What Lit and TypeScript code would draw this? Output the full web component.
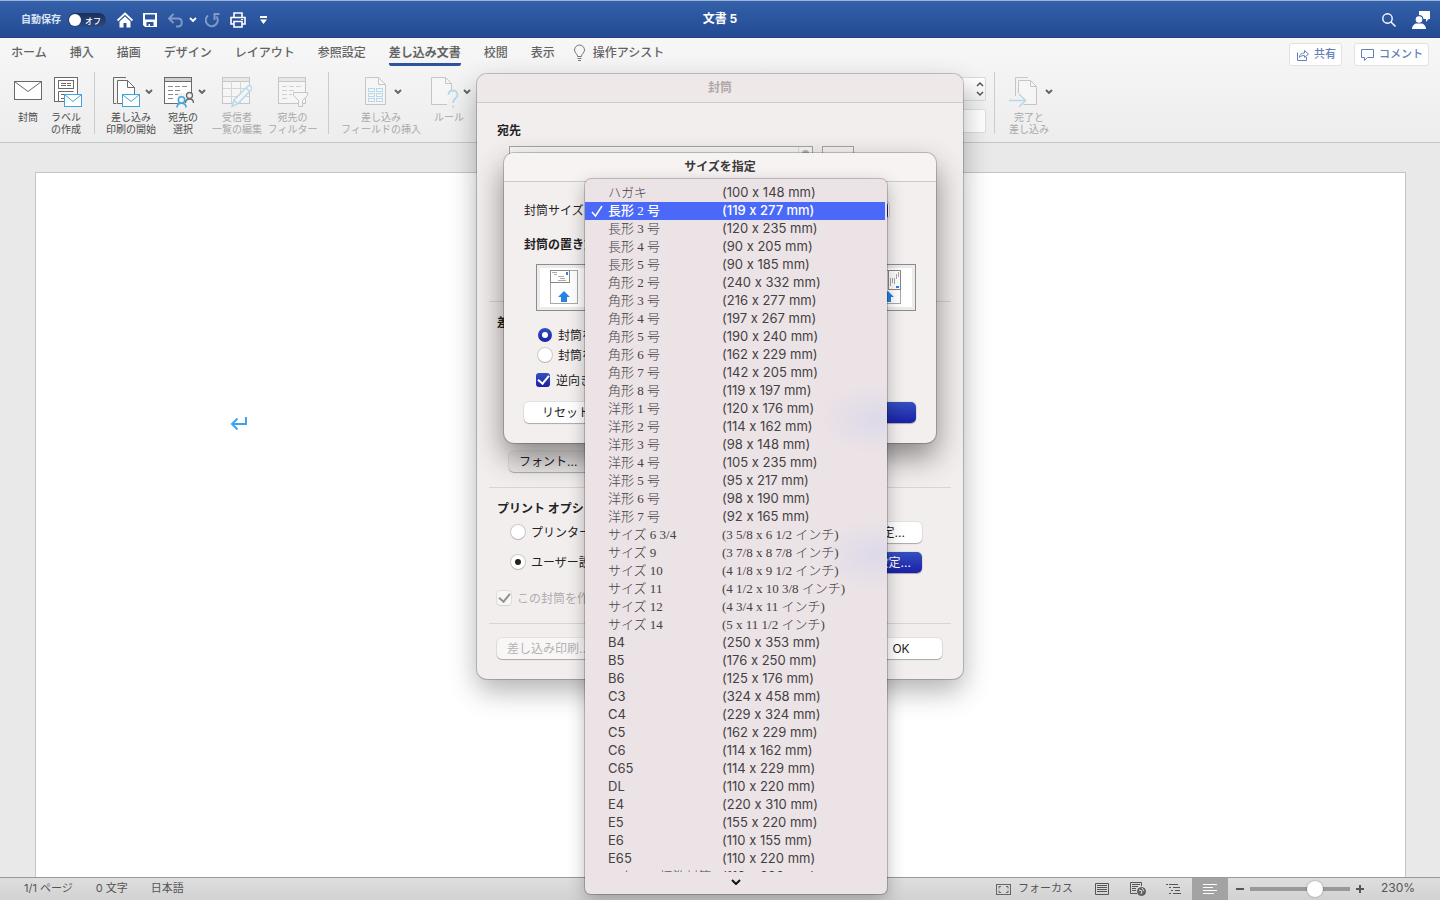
import { LitElement, html, css, svg } from "lit";
import { customElement, state } from "lit/decorators.js";
import { classMap } from "lit/directives/class-map.js";

type Row = { name: string; size: string; serif?: boolean; serifSize?: boolean };

const jp = (name: string, size: string): Row => ({ name, size, serif: true });
const inch = (name: string, size: string): Row => ({ name, size, serif: true, serifSize: true });
const en = (name: string, size: string): Row => ({ name, size });

const SIZES: Row[] = [
  jp("ハガキ", "(100 x 148 mm)"),
  jp("長形 2 号", "(119 x 277 mm)"),
  jp("長形 3 号", "(120 x 235 mm)"),
  jp("長形 4 号", "(90 x 205 mm)"),
  jp("長形 5 号", "(90 x 185 mm)"),
  jp("角形 2 号", "(240 x 332 mm)"),
  jp("角形 3 号", "(216 x 277 mm)"),
  jp("角形 4 号", "(197 x 267 mm)"),
  jp("角形 5 号", "(190 x 240 mm)"),
  jp("角形 6 号", "(162 x 229 mm)"),
  jp("角形 7 号", "(142 x 205 mm)"),
  jp("角形 8 号", "(119 x 197 mm)"),
  jp("洋形 1 号", "(120 x 176 mm)"),
  jp("洋形 2 号", "(114 x 162 mm)"),
  jp("洋形 3 号", "(98 x 148 mm)"),
  jp("洋形 4 号", "(105 x 235 mm)"),
  jp("洋形 5 号", "(95 x 217 mm)"),
  jp("洋形 6 号", "(98 x 190 mm)"),
  jp("洋形 7 号", "(92 x 165 mm)"),
  inch("サイズ 6 3/4", "(3 5/8 x 6 1/2 インチ)"),
  inch("サイズ 9", "(3 7/8 x 8 7/8 インチ)"),
  inch("サイズ 10", "(4 1/8 x 9 1/2 インチ)"),
  inch("サイズ 11", "(4 1/2 x 10 3/8 インチ)"),
  inch("サイズ 12", "(4 3/4 x 11 インチ)"),
  inch("サイズ 14", "(5 x 11 1/2 インチ)"),
  en("B4", "(250 x 353 mm)"),
  en("B5", "(176 x 250 mm)"),
  en("B6", "(125 x 176 mm)"),
  en("C3", "(324 x 458 mm)"),
  en("C4", "(229 x 324 mm)"),
  en("C5", "(162 x 229 mm)"),
  en("C6", "(114 x 162 mm)"),
  en("C65", "(114 x 229 mm)"),
  en("DL", "(110 x 220 mm)"),
  en("E4", "(220 x 310 mm)"),
  en("E5", "(155 x 220 mm)"),
  en("E6", "(110 x 155 mm)"),
  en("E65", "(110 x 220 mm)"),
  jp("イタリア標準封筒", "(110 x 230 mm)"),
];

const shared = css`
  * { box-sizing: border-box; }
  button, input, select {
    font: inherit;
    color: inherit;
    margin: 0;
  }
  button {
    border: 0;
    padding: 0;
    background: none;
    white-space: nowrap;
  }
  svg { display: block; flex: none; }
  h1, h2, h3, ul, p { margin: 0; padding: 0; }
`;

const chevron = html`<svg width="8" height="6" viewBox="0 0 8 6" fill="none" stroke="#606060" stroke-width="1.800"><path d="M1 1l3 3 3-3" /></svg>`;

/* ---------- ribbon icons, all on a 32px high canvas ---------- */
const G = "#6a6a6a";
const B = "#41a5dc";

const envelope = (x: number, y: number, w: number, h: number, c: string) => svg`
  <rect x=${x} y=${y} width=${w} height=${h} fill="#fff" stroke=${c} />
  <path d=${`M${x} ${y}L${x + w / 2} ${y + h / 2 + 1}L${x + w} ${y}`} fill="none" stroke=${c} />`;

const sheet = (x: number, y: number, w: number, h: number) => svg`
  <path d=${`M${x} ${y}h${w - 7}l7 7v${h - 7}h${-w}z`} fill="#fff" stroke=${G} />
  <path d=${`M${x + w - 7} ${y}v7h7`} fill="none" stroke=${G} />`;

const table = svg`
  <rect x="0.5" y="1.5" width="27" height="26" fill="#fff" stroke=${G} />
  <rect x="1" y="2" width="26" height="3" fill="#d0d0d0" />
  <path d="M0.5 5.5h27" stroke=${G} />`;

const ICONS: Record<string, { w: number; art: unknown }> = {
  envelope: { w: 28, art: envelope(0.5, 5.5, 27, 18, G) },
  label: {
    w: 32,
    art: svg`<g transform="translate(4 0)">
      <rect x="0.5" y="1.5" width="23" height="24" fill="#fff" stroke=${G} />
      <rect x="4.5" y="4.5" width="15" height="8" fill="none" stroke=${G} />
      <path d="M7 7.500h5M13 7.500h4M7 9.500h5M13 9.500h4M7 18.500h3M7 22.500h3M19.500 15.500h-15v10h6" fill="none" stroke=${G} />
      ${envelope(10.5, 18.5, 17, 12, B)}</g>`,
  },
  merge: {
    w: 28,
    art: svg`
      <path d="M13 1.500H0.500v26h3" fill="none" stroke=${G} />
      ${sheet(4.5, 4.5, 17, 23)}
      ${envelope(9.5, 18.5, 17, 12, B)}`,
  },
  people: {
    w: 30,
    art: svg`
      ${table}
      <path d="M4 10.500h5M11 10.500h5M18 10.500h5M4 14.500h5M11 14.500h5M4 18.500h5M11 18.500h3M4 22.500h5" stroke="#8a8a8a" />
      <rect x="14" y="17" width="16" height="14" fill="#f2f2f2" />
      <g fill="none" stroke=${G} stroke-width="1.300"><circle cx="25.500" cy="19.500" r="3" /><path d="M21.500 27c0-2.500 1.500-4 4-4s4 1.500 4 4" /></g>
      <g fill="#f2f2f2" stroke=${B} stroke-width="1.500"><circle cx="17.500" cy="24" r="3.200" /><path d="M13 31.500c0-3 2-4.300 4.500-4.300s4.500 1.300 4.500 4.300" /></g>`,
  },
  edit: {
    w: 30,
    art: svg`
      ${table}
      <path d="M9.500 5v22M18.500 5v22M1 12.500h26M1 20.500h26" stroke="#999" />
      <path d="M10 30.500l2-6.500L25.500 10.500q2-1.500 3.500 0t0 3.500L15.500 28z M12 24l3.500 4M24 12l3.500 3.500" fill="#fff" stroke=${B} stroke-width="1.500" />`,
  },
  filter: {
    w: 30,
    art: svg`
      ${table}
      <path d="M4 10.500h5M11 10.500h5M18 10.500h5M4 14.500h5M11 14.500h5M4 18.500h5M11 18.500h3M4 22.500h5" stroke="#8a8a8a" />
      <path d="M15.500 16.500h14v3l-5 5v6h-4v-6l-5-5z" fill="#fff" stroke=${G} />`,
  },
  field: {
    w: 25,
    art: svg`
      ${sheet(0.5, 1.5, 20, 27)}
      <g fill="#fff" stroke=${B}>
        <rect x="3.500" y="12.500" width="6" height="3" /><rect x="11.500" y="12.500" width="6" height="3" />
        <rect x="3.500" y="17.500" width="6" height="3" /><rect x="11.500" y="17.500" width="6" height="3" />
        <rect x="3.500" y="22.500" width="6" height="3" /><rect x="11.500" y="22.500" width="6" height="3" />
      </g>`,
  },
  rule: {
    w: 28,
    art: svg`
      <path d="M16 28.500H0.500v-27h14l6 6v7" fill="#fff" stroke=${G} />
      <path d="M14.500 1.500v6h6" fill="none" stroke=${G} />
      <path d="M17.500 19c0-3 2-4.500 4.500-4.500s4.500 1.700 4.500 4.300c0 3.700-4.500 3.700-4.500 8.200M22 29.500v2" fill="none" stroke=${B} stroke-width="1.800" />`,
  },
  finish: {
    w: 32,
    art: svg`
      <path d="M19 1.500H6.500V20" fill="none" stroke=${G} />
      <path d="M9.500 17V4.500h12l6 6v18h-13" fill="#fff" stroke=${G} /><path d="M21.500 4.500v6h6" fill="none" stroke=${G} />
      <path d="M0 24.500h16M10 18l6.500 6.500L10 31" fill="none" stroke=${B} stroke-width="1.500" />`,
  },
};

@customElement("ribbon-item")
class RibbonItem extends LitElement {
  static properties = {
    icon: {},
    first: {},
    second: {},
    menu: { type: Boolean },
    off: { type: Boolean },
  };
  declare icon: string;
  declare first: string;
  declare second: string;
  declare menu: boolean;
  declare off: boolean;

  static styles = [
    shared,
    css`
      :host { display: block; flex: none; }
      .item {
        width: 100%;
        display: flex;
        flex-direction: column;
        align-items: center;
        padding-top: 6px;
        font-size: 10px;
        line-height: 12px;
        color: #4c4c4c;
      }
      .row { display: flex; gap: 4px; align-items: center; margin-bottom: 3px; }
      .label { display: flex; flex-direction: column; align-items: center; }
      .menu .label { padding-right: 4px; }
      .off svg.art { opacity: 0.32; }
      .off .label { color: #a9a9a9; }
    `,
  ];

  render() {
    const i = ICONS[this.icon];
    return html`<button class=${classMap({ item: true, off: this.off, menu: this.menu })}>
      <span class="row">
        <svg class="art" width=${i.w} height="32" viewBox="0 0 ${i.w} 32">${i.art}</svg>
        ${this.menu ? chevron : ""}
      </span>
      <span class="label"><span>${this.first}</span><span>${this.second}</span></span>
    </button>`;
  }
}

@customElement("size-menu")
class SizeMenu extends LitElement {
  @state() private selected = 1;

  static styles = [
    shared,
    css`
      :host {
        display: block;
        width: 302px;
        padding: 5px 0 0;
        border-radius: 6px;
        background:
          radial-gradient(ellipse 56px 36px at 290px 240px, rgba(205, 208, 235, 0.5), transparent),
          radial-gradient(ellipse 56px 36px at 290px 376px, rgba(205, 208, 235, 0.5), transparent),
          #ece3e6;
        box-shadow: 0 0 0 1px rgba(0, 0, 0, 0.2), 0 6px 18px rgba(0, 0, 0, 0.28);
        color: #434143;
        font-size: 13px;
      }
      .list { height: 688px; overflow: hidden; }
      .option {
        width: 300px;
        height: 18px;
        line-height: 16px;
        display: grid;
        grid-template-columns: 23px 114px 1fr;
        align-items: start;
        text-align: left;
      }
      .option svg { margin: 3px 0 0 6px; }
      .option .serif {
        font-family: "Liberation Serif", "Noto Sans CJK JP", serif;
        font-weight: 300;
        line-height: 18px;
      }
      .option.selected { background: #4a69f8; color: #fff; }
      .option.selected .text { font-weight: 500; }
      .more { display: flex; width: 100%; justify-content: center; padding: 7px 0 9px; }
    `,
  ];

  render() {
    return html`
      <div class="list" role="listbox" aria-label="封筒サイズ">
        ${SIZES.map(
          (s, i) => html`<button
            class=${classMap({ option: true, selected: i === this.selected })}
            role="option"
            aria-selected=${i === this.selected}
            @click=${() => (this.selected = i)}
          >
            <span>${i === this.selected
              ? html`<svg width="12" height="12" viewBox="0 0 12 12" fill="none" stroke="#fff" stroke-width="1.500"><path d="M1 7l3.500 4L11 1" /></svg>`
              : ""}</span>
            <span class=${classMap({ text: true, serif: !!s.serif })}>${s.name}</span>
            <span class=${classMap({ text: true, serif: !!s.serifSize })}>${s.size}</span>
          </button>`
        )}
      </div>
      <button class="more" aria-label="次へ">
        <svg width="10" height="6" viewBox="0 0 10 6" fill="none" stroke="#111" stroke-width="2"><path d="M1 1l4 4 4-4" /></svg>
      </button>
    `;
  }
}

const dialogStyles = css`
  .title {
    height: 29px;
    line-height: 28px;
    text-align: center;
    font-size: 12px;
    font-weight: 700;
    border-bottom: 1px solid #cfc9ca;
  }
  h3 { font-size: 12px; height: 18px; line-height: 20px; font-weight: 700; color: #222; }
  .push {
    height: 21px;
    line-height: 19px;
    border-radius: 5px;
    background: #fff;
    box-shadow: 0 0 0 1px rgba(0, 0, 0, 0.06), 0 1px 1px rgba(0, 0, 0, 0.25);
    font-size: 12px;
    text-align: left;
  }
  .push.blue { background: linear-gradient(#3450bf, #1a20a6); color: #fff; }
  .push.center { text-align: center; }
  .choice { display: flex; align-items: center; gap: 6px; height: 20px; }
  .choice span { padding-bottom: 2px; }
  .choice input {
    appearance: none;
    flex: none;
    display: grid;
    place-items: center;
    width: 14px;
    height: 14px;
    background: #fff;
    box-shadow: 0 0 0 1px rgba(0, 0, 0, 0.14), 0 1px 1px rgba(0, 0, 0, 0.12);
  }
  .choice input[type="radio"] { border-radius: 50%; }
  .choice input[type="checkbox"] { border-radius: 3px; }
  .choice input[type="radio"]:checked::after {
    content: "";
    width: 6px;
    height: 6px;
    border-radius: 50%;
    background: #222;
  }
  .choice input[type="checkbox"]:checked::after {
    content: "";
    width: 5px;
    height: 9px;
    margin-bottom: 3px;
    border: solid #222;
    border-width: 0 2px 2px 0;
    transform: rotate(40deg);
  }
  .choice.accent input:checked { background: linear-gradient(#3450bf, #1a20a6); box-shadow: none; }
  .choice.accent input[type="radio"]:checked::after { background: #fff; }
  .choice.accent input[type="checkbox"]:checked::after { border-color: #fff; }
`;

@customElement("envelope-dialog")
class EnvelopeDialog extends LitElement {
  static styles = [
    shared,
    dialogStyles,
    css`
      :host {
        display: block;
        width: 486px;
        border-radius: 10px;
        overflow: hidden;
        background: #f3eeee;
        box-shadow: 0 0 0 1px rgba(0, 0, 0, 0.2), 0 12px 28px rgba(0, 0, 0, 0.3);
        font-size: 12px;
        color: #222;
      }
      .title { background: #eee8e8; color: #aea9aa; }
      .body { padding: 0 12px; }
      section {
        display: flex;
        flex-direction: column;
        padding: 11px 8px 0;
        border-bottom: 1px solid #d8d3d4;
      }
      .to { min-height: 199px; padding-top: 18px; }
      .from { min-height: 186px; justify-content: space-between; padding-bottom: 15px; align-items: flex-start; }
      .fields { display: flex; gap: 9px; margin: 7px 0 0 12px; }
      .address {
        width: 304px;
        height: 80px;
        display: flex;
        justify-content: flex-end;
        border: 1px solid #a5a2a3;
        background: #f5f5f5;
      }
      .track { width: 14px; border-left: 1px solid #ddd; padding: 3px 3px; }
      .thumb { display: block; height: 40px; border-radius: 4px; background: #b5b5b5; }
      .book { width: 32px; height: 20px; border: 1px solid #a5a2a3; background: #f5f1f1; }
      .font { margin-left: 12px; width: 90px; padding-left: 10px; background: #eae6e6; }
      .option { display: flex; align-items: center; justify-content: space-between; height: 30px; padding: 0 21px 0 14px; }
      .page { padding: 0 17px; }
      .custom { padding: 0 11px; }
      .again { margin: 10px 0 14px; height: 22px; color: #b0abac; }
      .again input { opacity: 0.45; }
      .footer { display: flex; justify-content: space-between; padding: 14px 9px 20px 8px; }
      .merge { padding: 0 10px; color: #b5b1b2; background: #f9f6f6; }
      .ok { width: 82px; }
    `,
  ];

  render() {
    return html`
      <h2 class="title">封筒</h2>
      <div class="body">
        <section class="to">
          <h3>宛先</h3>
          <div class="fields">
            <div class="address"><span class="track"><span class="thumb"></span></span></div>
            <button class="book" aria-label="アドレス帳"></button>
          </div>
        </section>
        <section class="from">
          <h3>差出人</h3>
          <button class="push font">フォント...</button>
        </section>
        <section>
          <h3>プリント オプション</h3>
          <div class="option">
            <label class="choice"><input type="radio" name="feed" /><span>プリンター</span></label>
            <button class="push page">ページ設定...</button>
          </div>
          <div class="option">
            <label class="choice"><input type="radio" name="feed" checked /><span>ユーザー設定</span></label>
            <button class="push custom blue">ユーザー設定...</button>
          </div>
          <label class="choice again"><input type="checkbox" checked disabled /><span>この封筒を作成</span></label>
        </section>
        <div class="footer">
          <button class="push merge" disabled>差し込み印刷...</button>
          <button class="push center ok">OK</button>
        </div>
      </div>
    `;
  }
}

@customElement("size-dialog")
class SizeDialog extends LitElement {
  static styles = [
    shared,
    dialogStyles,
    css`
      :host {
        display: block;
        width: 432px;
        border-radius: 10px;
        overflow: hidden;
        background: #f4efef;
        box-shadow: 0 0 0 1px rgba(0, 0, 0, 0.2), 0 14px 30px rgba(0, 0, 0, 0.45);
        font-size: 12px;
        color: #222;
      }
      .title { background: #f8f3f3; color: #3c3a3b; }
      .body { padding: 17px 20px 20px; }
      .size { display: flex; align-items: center; gap: 4px; height: 22px; margin-bottom: 14px; }
      .size label { padding-bottom: 2px; }
      .size select {
        appearance: none;
        width: 300px;
        height: 17px;
        border: 0;
        border-radius: 4px;
        background: linear-gradient(#26339c, #101890);
        box-shadow: 0 0 0 1px #fff, 0 0 0 2px rgba(0, 0, 0, 0.15);
      }
      .feeds { display: flex; justify-content: space-between; margin: 11px 0 14px 12px; }
      .feed { border: 1px solid #8d8b8c; background: #fff; box-shadow: inset 0 0 0 3px #ececec; padding: 4px 13px; }
      .face { margin-left: 14px; }
      .flip { margin: 5px 0 12px 12px; }
      .buttons { display: flex; justify-content: space-between; }
      .reset { width: 84px; padding-left: 18px; }
      .ok { width: 84px; }
    `,
  ];

  private feed(side: boolean) {
    return html`<button class="feed" aria-label=${side ? "右" : "左"}>
      <svg width="29" height="37" viewBox="0 0 29 37" fill="none">
        <rect x="0.500" y="1.500" width="27" height="33" stroke="#aaa" />
        ${side
          ? svg`<rect x="15.500" y="1.500" width="12" height="19" fill="#fff" stroke="#888" />
              <path d="M17.500 9v8M19.500 9v5M21.500 9v6M23.500 5v5M25.500 3v5" stroke="#aaa" />
              <path d="M23 18h3" stroke="#2684e0" stroke-width="2" />`
          : svg`<rect x="0.500" y="1.500" width="19" height="12" fill="#fff" stroke="#888" />
              <path d="M2 3.500h5M4 5.500h3M8 7.500h6M10 9.500h5M8 11.500h8" stroke="#aaa" />
              <path d="M17 3v3" stroke="#2684e0" stroke-width="2" />`}
        <path d=${side ? "M15 22l6 6h-3v5h-6v-5h-3z" : "M14 22l6 6h-3v5h-6v-5H8z"} fill="#2684e0" />
      </svg>
    </button>`;
  }

  render() {
    return html`
      <h2 class="title">サイズを指定</h2>
      <div class="body">
        <div class="size"><label for="size">封筒サイズ</label><select id="size"></select></div>
        <h3>封筒の置き方</h3>
        <div class="feeds">${[0, 1, 2, 3, 4, 5].map((i) => this.feed(i > 2))}</div>
        <label class="choice accent face"><input type="radio" name="face" checked /><span>封筒を下向き</span></label>
        <label class="choice accent face"><input type="radio" name="face" /><span>封筒を上向き</span></label>
        <label class="choice accent flip"><input type="checkbox" checked /><span>逆向き</span></label>
        <div class="buttons">
          <button class="push reset">リセット</button>
          <button class="push blue ok" aria-label="決定"></button>
        </div>
      </div>
    `;
  }
}

@customElement("app-root")
class AppRoot extends LitElement {
  static styles = [
    shared,
    css`
      :host {
        display: flex;
        flex-direction: column;
        position: relative;
        height: 100vh;
        overflow: hidden;
        font-family: Inter, "Noto Sans CJK JP", sans-serif;
        font-variant-ligatures: no-contextual;
        background: #e9e9e9;
      }

      .titlebar {
        display: grid;
        grid-template-columns: 1fr auto 1fr;
        align-items: center;
        height: 38px;
        padding: 2px 10px 0;
        border-top: 1px solid #9fb3d6;
        border-bottom: 1px solid #1f4283;
        background: linear-gradient(#3461aa, #234a92);
        color: #fff;
      }
      .titlebar h1 { font-size: 12px; line-height: 16px; padding-bottom: 2px; font-weight: 700; }
      .quick { display: flex; align-items: center; padding-left: 11px; font-size: 10px; font-weight: 700; color: #dbe4f3; }
      .quick label { line-height: 14px; padding-bottom: 2px; }
      .quick button { display: block; }
      .toggle {
        appearance: none;
        display: flex;
        align-items: center;
        gap: 4px;
        width: 38px;
        height: 14px;
        margin: 0 11px 0 7px;
        border-radius: 7px;
        background: linear-gradient(#1b2f58, #2c4a83);
      }
      .toggle::before { content: ""; width: 12px; height: 12px; margin-left: 1px; border-radius: 50%; background: #fff; }
      .toggle::after { content: "オフ"; font-size: 8px; font-weight: 500; color: #fff; }
      .g5 { margin-left: 5px; }
      .g8 { margin-left: 8px; }
      .g10 { margin-left: 10px; }
      .g12 { margin-left: 12px; }
      .dim { opacity: 0.4; }
      .account { display: flex; justify-content: flex-end; align-items: center; gap: 16px; }

      .head {
        flex: none;
        background: linear-gradient(#f7f7f7, #ededed);
        border-bottom: 1px solid #c6c6c6;
      }
      .tabrow { display: flex; justify-content: space-between; align-items: flex-start; height: 32px; padding: 5px 11px 0 11px; }
      .tabs { display: flex; gap: 23px; font-size: 12px; line-height: 20px; font-weight: 500; color: #636363; }
      .tabs a { color: inherit; text-decoration: none; border-bottom: 3px solid transparent; white-space: nowrap; }
      .tabs .on { font-weight: 700; border-bottom-color: #2b549c; border-radius: 0 0 2px 2px; }
      .tabs .assist { display: flex; gap: 7px; margin-left: -5px; }
      .share { display: flex; gap: 12px; font-size: 11px; font-weight: 500; color: #6380b8; }
      .share button {
        display: flex;
        align-items: center;
        gap: 5px;
        height: 23px;
        padding: 0 5px 0 6px;
        border: 1px solid #e2e2e2;
        border-radius: 3px;
        background: #fff;
        line-height: 14px;
      }
      .share span { padding-bottom: 2px; }
      .ribbon { display: flex; align-items: flex-start; height: 72px; padding-left: 10px; }
      .rule { flex: none; width: 1px; height: 62px; margin: 2px 10px 0 8px; background: #ccc; }
      .w36 { width: 36px; }
      .w40 { width: 40px; }
      .w48 { width: 48px; }
      .w52 { width: 52px; }
      .w55 { width: 55px; }
      .w56 { width: 56px; }
      .w88 { width: 88px; }
      .results { width: 511px; padding-top: 7px; display: flex; flex-direction: column; align-items: flex-end; gap: 8px; }
      .step { display: flex; justify-content: flex-end; align-items: center; width: 100px; height: 24px; padding-right: 1px; border: 1px solid #d9d9d9; border-radius: 2px; background: linear-gradient(#fff, #f1f1f1); }
      .value { width: 100px; height: 24px; border: 1px solid #dedede; border-radius: 2px; background: #fff; }

      .workspace { flex: 1; min-height: 0; padding: 29px 34px 0 35px; }
      .page { height: 100%; border: 1px solid #c4c4c4; border-bottom: 0; background: #fff; padding: 242px 194px; }

      .status {
        flex: none;
        display: flex;
        align-items: center;
        justify-content: space-between;
        height: 23px;
        padding: 0 24px;
        border-top: 1px solid #999;
        background: linear-gradient(#dedede, #d2d2d2);
        font-size: 11px;
        line-height: 14px;
        color: #555;
      }
      .counts { display: flex; gap: 23px; padding-bottom: 2px; }
      .views { display: flex; align-items: center; height: 22px; }
      .views button { display: flex; align-items: center; justify-content: center; gap: 7px; height: 22px; }
      .views span { padding-bottom: 2px; }
      .view { width: 36px; }
      .view.on { background: #a3a3a3; }
      .focus { margin-right: 11px; }
      .zoom {
        appearance: none;
        width: 100px;
        height: 16px;
        margin: 0 6px;
        background: linear-gradient(#999, #999) center / 100% 4px no-repeat;
      }
      .zoom::-webkit-slider-thumb {
        appearance: none;
        width: 16px;
        height: 16px;
        border-radius: 50%;
        background: #fff;
        box-shadow: 0 0 2px rgba(0, 0, 0, 0.4);
      }
      .percent { width: 35px; margin-left: 17px; font-size: 12px; }

      .layer {
        position: absolute;
        inset: 0;
        display: flex;
        align-items: flex-start;
        justify-content: center;
      }
      .first { padding-top: 74px; }
      .second { padding-top: 153px; }
      .third { padding: 179px 0 0 32px; }
    `,
  ];

  render() {
    return html`
      <header class="titlebar">
        <div class="quick">
          <label for="autosave">自動保存</label>
          <input class="toggle" id="autosave" type="checkbox" role="switch" />
          <button aria-label="ホーム">
            <svg width="16" height="16" viewBox="0 0 16 16"><path d="M0.500 8.500L8 1.500l7.500 7" fill="none" stroke="#fff" stroke-width="1.800" /><path d="M2.500 9.500L8 4.500l5.500 5V15.500H9.500V11h-3v4.500h-4z" fill="#fff" /></svg>
          </button>
          <button class="g10" aria-label="保存">
            <svg width="14" height="14" viewBox="0 0 14 14"><path d="M0 0h14v14H2l-2-2z" fill="#fff" /><path d="M2 1.500h10v5H2zM3.500 9h7v4H7v-2H5.500v2h-2z" fill="#2b559f" /></svg>
          </button>
          <button class="g10 dim" aria-label="元に戻す">
            <svg width="17" height="15" viewBox="0 0 17 15" fill="none" stroke="#fff" stroke-width="2"><path d="M6.500 1L2 5.500 6.500 10M2 5.500h9c5 0 5 8 0 8H9" /></svg>
          </button>
          <button class="g5" aria-label="履歴"><svg width="8" height="6" viewBox="0 0 8 6" fill="none" stroke="#fff" stroke-width="1.800"><path d="M1 1l3 3 3-3" /></svg></button>
          <button class="g8 dim" aria-label="やり直し">
            <svg width="15" height="16" viewBox="0 0 15 16" fill="none" stroke="#fff" stroke-width="2"><path d="M3 3.500a6 6 0 1 0 8.500 1M9.500 8V2h5" /></svg>
          </button>
          <button class="g10" aria-label="プリント">
            <svg width="16" height="16" viewBox="0 0 16 16" fill="none" stroke="#fff" stroke-width="1.600"><path d="M4 5V1h8v4M4 12H1V5.500h14V12h-3M4 9.500h8V15H4z" /><path d="M11 7.500h2" stroke-width="1" /></svg>
          </button>
          <button class="g12" aria-label="カスタマイズ">
            <svg width="10" height="8" viewBox="0 0 10 8" fill="#fff"><path d="M2 0h7v2H2zM2 3.500h7L5.500 8z" /></svg>
          </button>
        </div>
        <h1>文書 5</h1>
        <div class="account">
          <button aria-label="検索"><svg width="14" height="14" viewBox="0 0 14 14" fill="none" stroke="#fff" stroke-width="1.400"><circle cx="5.500" cy="5.500" r="4.700" /><path d="M9 9l4.500 4.500" /></svg></button>
          <button aria-label="アカウント"><svg width="18" height="18" viewBox="0 0 18 18" fill="#fff"><path d="M7 0h11v8h-1.500l-2.500 3V8h-2.500C11 5 9.500 4 7 4z" /><circle cx="7" cy="8.500" r="3.300" /><path d="M0 18c0-3.500 3-5.500 4.500-5.500h5c1.500 0 4.500 2 4.500 5.500z" /></svg></button>
        </div>
      </header>

      <div class="head">
        <div class="tabrow">
          <nav class="tabs">
            ${["ホーム", "挿入", "描画", "デザイン", "レイアウト", "参照設定", "差し込み文書", "校閲", "表示"].map(
              (t) => html`<a href="#" class=${classMap({ on: t === "差し込み文書" })}>${t}</a>`
            )}
            <a href="#" class="assist"><svg width="13" height="20" viewBox="0 -1 13 20" fill="none" stroke="#777"><path d="M4.500 12.500c0-3-3-3.500-3-6.500a5 5 0 0 1 10 0c0 3-3 3.500-3 6.500zM4.500 14.500h4M5 16.500h3" /></svg>操作アシスト</a>
          </nav>
          <div class="share">
            <button><svg width="13" height="13" viewBox="0 0 13 13" fill="none" stroke="#6380b8"><path d="M1.500 4.500v8h9V9M3.500 9.500c0-3 2-4.500 5-4.500V2.500l4 3.500-4 3.500V7.500c-2 0-4 .5-5 2z" /></svg><span>共有</span></button>
            <button><svg width="13" height="13" viewBox="0 0 13 13" fill="none" stroke="#6380b8"><path d="M0.500 1.500h12v8h-6l-3 3v-3h-3z" /></svg><span>コメント</span></button>
          </div>
        </div>
        <div class="ribbon">
          <ribbon-item class="w36" icon="envelope" first="封筒" second=""></ribbon-item>
          <ribbon-item class="w40" icon="label" first="ラベル" second="の作成"></ribbon-item>
          <span class="rule"></span>
          <ribbon-item class="w56" icon="merge" first="差し込み" second="印刷の開始" menu></ribbon-item>
          <ribbon-item class="w48" icon="people" first="宛先の" second="選択" menu></ribbon-item>
          <ribbon-item class="w56" icon="edit" first="受信者" second="一覧の編集" off></ribbon-item>
          <ribbon-item class="w55" icon="filter" first="宛先の" second="フィルター" off></ribbon-item>
          <span class="rule"></span>
          <ribbon-item class="w88" icon="field" first="差し込み" second="フィールドの挿入" menu off></ribbon-item>
          <ribbon-item class="w48" icon="rule" first="ルール" second="" menu off></ribbon-item>
          <div class="results">
            <div class="step"><svg width="8" height="16" viewBox="0 0 8 16" fill="none" stroke="#555" stroke-width="1.500"><path d="M1 5l3-3 3 3M1 11l3 3 3-3" /></svg></div>
            <input class="value" aria-label="レコード" />
          </div>
          <span class="rule"></span>
          <ribbon-item class="w52" icon="finish" first="完了と" second="差し込み" menu off></ribbon-item>
        </div>
      </div>

      <main class="workspace">
        <div class="page">
          <svg width="17" height="17" viewBox="0 0 17 17" fill="none" stroke="#3ea3ee" stroke-width="2"><path d="M16 2v7H2M7.500 3.500L2 9l5.500 5.500" /></svg>
        </div>
      </main>

      <footer class="status">
        <div class="counts"><span>1/1 ページ</span><span>0 文字</span><span>日本語</span></div>
        <div class="views">
          <button class="focus"><svg width="15" height="11" viewBox="0 0 15 11" fill="none" stroke="#666"><rect x="0.500" y="0.500" width="14" height="10" /><path d="M3 4.500v-2h2M10 2.500h2v2M12 6.500v2h-2M5 8.500H3v-2" /></svg><span>フォーカス</span></button>
          <button class="view" aria-label="印刷レイアウト"><svg width="14" height="12" viewBox="0 0 14 12" fill="none" stroke="#555"><path d="M0.500 0.500h13v11H0.500zM2 2.500h10M2 4.500h10M2 6.500h10M2 8.500h10" /></svg></button>
          <button class="view" aria-label="Web レイアウト"><svg width="16" height="14" viewBox="0 0 16 14" fill="none" stroke="#555"><path d="M7 11.500H0.500v-11h11V4M2 2.500h8M2 4.500h6M2 6.500h4M2 8.500h4" /><circle cx="11.500" cy="9.500" r="4" fill="#666" /><path d="M9 8l3 1-1 3M12 6l2 3" stroke="#ddd" /></svg></button>
          <button class="view" aria-label="アウトライン"><svg width="16" height="12" viewBox="0 0 16 12" stroke="#555"><path d="M0 1.500h2M3 1.500h9M3 4.500h2M7 4.500h7M5 7.500h2M9 7.500h5M3 10.500h2M7 10.500h8" /></svg></button>
          <button class="view on" aria-label="下書き"><svg width="14" height="11" viewBox="0 0 14 11" stroke="#fff"><path d="M0 .5h14M0 3.500h10M0 6.500h14M0 9.500h11" /></svg></button>
          <button class="g8" aria-label="縮小"><svg width="8" height="10" viewBox="0 0 8 10" stroke="#555" stroke-width="2"><path d="M0 5h8" /></svg></button>
          <input class="zoom" type="range" min="10" max="500" value="340" aria-label="ズーム" />
          <button aria-label="拡大"><svg width="8" height="10" viewBox="0 0 8 10" stroke="#555" stroke-width="2"><path d="M0 5h8M4 1v8" /></svg></button>
          <span class="percent">230%</span>
        </div>
      </footer>

      <div class="layer first"><envelope-dialog></envelope-dialog></div>
      <div class="layer second"><size-dialog></size-dialog></div>
      <div class="layer third"><size-menu></size-menu></div>
    `;
  }
}
